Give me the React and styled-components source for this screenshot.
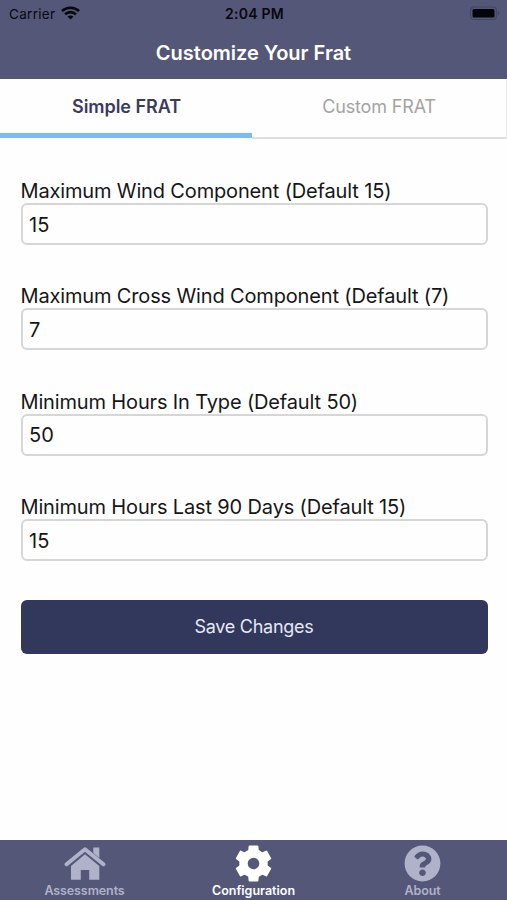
import React, { useState } from 'react';
import styled, { createGlobalStyle } from 'styled-components';
import { FaQuestionCircle } from 'react-icons/fa';

const GlobalStyle = createGlobalStyle`
  * {
    box-sizing: border-box;
  }

  body {
    margin: 0;
    background: #fff;
    font-family: Inter, 'Liberation Sans', sans-serif;
  }

  button, input {
    font-family: inherit;
  }
`;

const Screen = styled.div`
  display: flex;
  flex-direction: column;
  width: 507px;
  height: 900px;
  background: #fefefe;
  overflow: hidden;
`;

const Header = styled.header`
  flex: none;
  height: 79px;
  background: #545778;
`;

const StatusBar = styled.div`
  display: grid;
  grid-template-columns: 1fr auto 1fr;
  align-items: center;
  height: 27px;
  padding: 0 7px 0 9px;
  color: #08080c;
  font-size: 13.5px;
`;

const Carrier = styled.div`
  display: flex;
  align-items: center;
  gap: 6px;
  letter-spacing: 0.3px;
`;

const Clock = styled.div`
  font-size: 14px;
  font-weight: 600;
  letter-spacing: 0.25px;
`;

const Battery = styled.svg`
  justify-self: end;
`;

const Title = styled.h1`
  margin: 0;
  color: #fff;
  font-size: 20px;
  font-weight: 600;
  line-height: 52px;
  text-align: center;
  letter-spacing: 0;
`;

const Tabs = styled.div`
  display: flex;
  flex: none;
  height: 60px;
`;

const Tab = styled.button`
  flex: ${({ $active }) => ($active ? '0 0 252px' : '1')};
  padding: ${({ $active }) => ($active ? '1px 0 0 1px' : '0 0 4px')};
  border: 0;
  border-bottom: ${({ $active }) => ($active ? '5px solid #7dbcf3' : '2px solid #dedee2')};
  border-right: ${({ $active }) => ($active ? '0' : '1px solid #e6e6ea')};
  margin-bottom: ${({ $active }) => ($active ? '1px' : '0')};
  background: #fefefe;
  color: ${({ $active }) => ($active ? '#3a3a64' : '#a3a3a3')};
  font-size: 18px;
  font-weight: ${({ $active }) => ($active ? 600 : 400)};
  letter-spacing: ${({ $active }) => ($active ? '-0.05px' : '-0.15px')};
`;

const Form = styled.form`
  display: flex;
  flex: 1;
  flex-direction: column;
  padding: 39px 19.5px 0 20.5px;
`;

const Field = styled.label`
  display: flex;
  flex-direction: column;
  height: 105.4px;
  color: #161616;
`;

const Label = styled.span`
  height: 25px;
  font-size: 20px;
  line-height: 26px;
  white-space: nowrap;
  letter-spacing: -0.15px;
`;

const Input = styled.input`
  width: 100%;
  height: 42px;
  padding: 1px 6.5px 0;
  border: 2px solid #d6d6d6;
  border-radius: 6px;
  background: #fefefe;
  color: #161616;
  font-size: 20px;
  outline: none;
`;

const SaveButton = styled.button`
  height: 54px;
  padding-top: 1px;
  border: 0;
  border-radius: 6px;
  background: #32375c;
  color: #e6e8f4;
  font-size: 18px;
  letter-spacing: -0.28px;
`;

const TabBar = styled.nav`
  display: grid;
  grid-template-columns: repeat(3, 1fr);
  flex: none;
  height: 60px;
  background: #545778;
`;

const NavItem = styled.a`
  display: flex;
  flex-direction: column;
  align-items: center;
  padding-top: 5px;
  color: ${({ $active }) => ($active ? '#fff' : '#afb2c9')};
  font-size: 12.5px;
  font-weight: 600;
  line-height: 18px;
  letter-spacing: ${({ $active }) => ($active ? '0' : '-0.1px')};
`;

const HomeIcon = () => (
  <svg width="42" height="37" viewBox="0 0 42 37" fill="currentColor">
    <path d="M29.3 2.5H35.3V13L29.3 8Z" />
    <path
      d="M2.6 19.2L21 4.2L39.4 19.2"
      fill="none"
      stroke="currentColor"
      strokeWidth="4"
      strokeLinecap="round"
      strokeLinejoin="round"
    />
    <path d="M21 9.2L35.3 21V34.8H25.2V25H16.8V34.8H7V21Z" />
  </svg>
);

const teeth = [0, 60, 120];

const GearIcon = () => (
  <svg width="37" height="37" viewBox="0 0 37 37">
    <g stroke="currentColor" fill="none">
      <circle cx="18.5" cy="18.5" r="10" strokeWidth="8.4" />
      {teeth.map((angle) => (
        <g key={angle} fill="currentColor" strokeWidth="2" strokeLinejoin="round" transform={`rotate(${angle} 18.5 18.5)`}>
          <path d="M14.6 1.5H22.4L23 7.5H14Z" />
          <path d="M14.6 35.5H22.4L23 29.5H14Z" />
        </g>
      ))}
    </g>
  </svg>
);

const WifiIcon = () => (
  <svg width="19" height="15" viewBox="0 0 19 15" fill="none" stroke="currentColor" strokeWidth="2.6">
    <path d="M1 5C5.8 0.7 13.2 0.7 18 5" />
    <path d="M4.1 8.3C7.2 5.4 11.8 5.4 14.9 8.3" />
    <path d="M9.5 13.6L6.5 10.6C8.2 9 10.8 9 12.5 10.6Z" fill="currentColor" stroke="none" />
  </svg>
);

const fields = [
  { name: 'wind', label: 'Maximum Wind Component (Default 15)', value: '15' },
  { name: 'crossWind', label: 'Maximum Cross Wind Component (Default (7)', value: '7' },
  { name: 'hoursInType', label: 'Minimum Hours In Type (Default 50)', value: '50' },
  { name: 'hoursLast90', label: 'Minimum Hours Last 90 Days (Default 15)', value: '15' },
];

const App = () => {
  const [values, setValues] = useState(
    Object.fromEntries(fields.map((field) => [field.name, field.value]))
  );

  const handleChange = (e) => {
    setValues({ ...values, [e.target.name]: e.target.value });
  };

  return (
    <Screen>
      <GlobalStyle />
      <Header>
        <StatusBar>
          <Carrier>
            Carrier
            <WifiIcon />
          </Carrier>
          <Clock>2:04 PM</Clock>
          <Battery width="31" height="15" viewBox="0 0 31 15">
            <rect x="1.5" y="1" width="26" height="12.5" rx="3.5" fill="none" stroke="#44465f" strokeWidth="1.2" />
            <rect x="3.5" y="3" width="22" height="8.5" rx="1.5" fill="#050508" />
            <path d="M29 5.2C30.6 5.8 30.6 8.6 29 9.2Z" fill="#44465f" />
          </Battery>
        </StatusBar>
        <Title>Customize Your Frat</Title>
      </Header>

      <Tabs>
        <Tab $active>Simple FRAT</Tab>
        <Tab>Custom FRAT</Tab>
      </Tabs>

      <Form onSubmit={(e) => e.preventDefault()}>
        {fields.map(({ name, label }) => (
          <Field key={name}>
            <Label>{label}</Label>
            <Input name={name} value={values[name]} onChange={handleChange} />
          </Field>
        ))}
        <SaveButton type="submit">Save Changes</SaveButton>
      </Form>

      <TabBar>
        <NavItem>
          <HomeIcon />
          Assessments
        </NavItem>
        <NavItem $active>
          <GearIcon />
          Configuration
        </NavItem>
        <NavItem>
          <FaQuestionCircle size={37} />
          About
        </NavItem>
      </TabBar>
    </Screen>
  );
};

export default App;
